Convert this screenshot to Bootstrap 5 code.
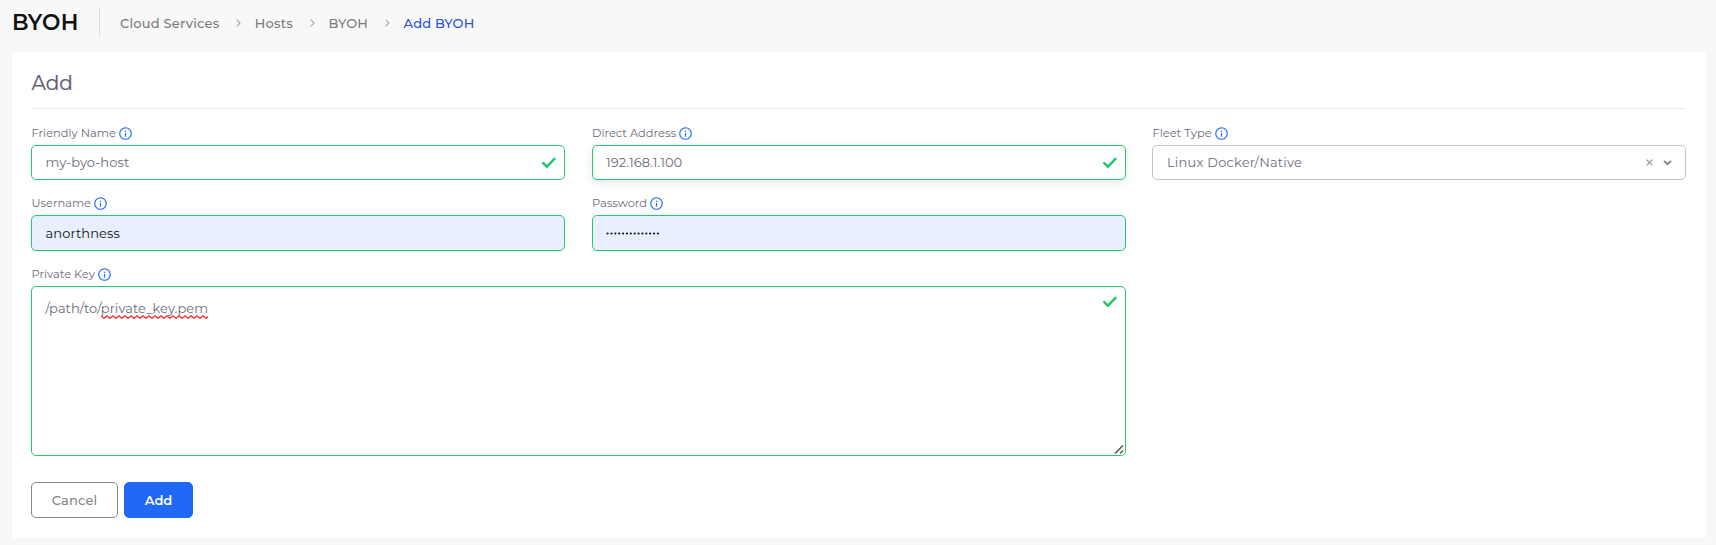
<!DOCTYPE html>
<html lang="en">
<head>
<meta charset="utf-8">
<title>Add BYOH</title>
<link rel="stylesheet" href="https://cdn.jsdelivr.net/npm/bootstrap@5.3.0/dist/css/bootstrap.min.css">
<style>
body{background:#f8f8f8;font-family:Montserrat,Inter,"Liberation Sans",sans-serif;font-size:13px;color:#6e6b7b;overflow:hidden}
.topbar{height:52px;padding:7px 12px 0}
.page-title{font-size:21.8px;letter-spacing:.4px;font-weight:600;color:#111;line-height:29px;width:88px;height:28px;border-right:1px solid #d6dce1;margin:1px 20px 0 0}
.crumbs{font-weight:500;font-size:13px;letter-spacing:.2px;color:#7b7b7b;line-height:32px;height:32px}
.crumbs a{color:inherit;text-decoration:none}
.crumbs .active{color:#2a50e0}
.crumbs svg{width:5px;height:8px;flex:none}
.panel{margin:0 10px 0 12px;height:486px;padding:0 20px 0 19px;border:0;border-radius:0}
.panel h4{font-size:20px;font-weight:400;color:#5e5873;-webkit-text-stroke:.2px #5e5873;line-height:24px;margin:0;padding:19px 0 13px .5px;height:57px;border-bottom:1px solid #ebe9f1}
.fields{display:grid;grid-template-columns:repeat(3,534px);column-gap:26.5px}
.wide{grid-column:span 2}
.fld label{display:flex;align-items:center;gap:3px;font-size:11.43px;line-height:16px;height:16px;margin:0 0 4px;padding-left:.5px;white-space:nowrap}
.fld label svg{width:13px;height:13px}
.form-control{font-size:13px;letter-spacing:.1px;line-height:19px;color:#6e6b7b;border-radius:5px;border-color:#28c76f;padding:7px 13px 7px 13.5px;height:35px;background:#fff}
.form-control.filled{background:#e8f0fe;color:#111;height:36px;padding-top:8px}
.form-control.raised{box-shadow:0 3px 10px rgba(34,41,47,.1)}
.form-control.area{height:170px;padding:12px 8px 1px 13.5px;position:relative}
.form-control.picker{border-color:#c6c6c6;padding-left:14px}
.check{width:14px;height:12px;flex:none}
.grip{position:absolute;right:1px;bottom:1px;width:10px;height:9px}
.misspelt{text-decoration:none;position:relative}
.misspelt svg{position:absolute;left:0;top:15px;width:107px;height:4px}
.act{font-size:13px;font-weight:500;letter-spacing:.15px;height:36px;border-radius:5px;padding:0;line-height:34px}
.act-cancel{width:87px;border:1px solid #82868b;color:#82868b}
.act-add{width:69px;background:#2068f8;color:#fff;border:1px solid #2068f8;font-weight:600;letter-spacing:0}
</style>
</head>
<body>
<svg class="d-none">
<symbol id="info" viewBox="0 0 13 13"><circle cx="6.5" cy="6.5" r="5.75" fill="none" stroke="#2068f8" stroke-width="1.15"/><path d="M6.5 5.9v3.5M6.5 3.7v1.2" stroke="#2068f8" stroke-width="1.2"/></symbol>
<symbol id="tick" viewBox="0 0 14 12"><path d="M1.3 6.1 5 9.7 12.4 1.9" fill="none" stroke="#28c76f" stroke-width="2.6" stroke-linejoin="round" stroke-linecap="round"/></symbol>
<symbol id="next" viewBox="0 0 5 8"><path d="M.7.7 4 4 .7 7.3" fill="none" stroke="#a9a9b0" stroke-width="1.1"/></symbol>
</svg>
<header class="topbar d-flex">
<div class="page-title">BYOH</div>
<nav class="crumbs d-flex align-items-center" aria-label="breadcrumb">
<a href="#">Cloud Services</a><svg style="margin:0 14px 0 16.5px"><use href="#next"/></svg>
<a href="#">Hosts</a><svg style="margin:0 14px 0 16.5px"><use href="#next"/></svg>
<a href="#">BYOH</a><svg style="margin:0 14px 0 16.5px"><use href="#next"/></svg>
<span class="active">Add BYOH</span>
</nav>
</header>
<main class="panel card">
<h4>Add</h4>
<div class="fields" style="padding-top:16px">
<div class="fld"><label>Friendly Name<svg><use href="#info"/></svg></label>
<div class="form-control d-flex align-items-center"><span class="me-auto">my-byo-host</span><svg class="check" style="margin-right:-5px"><use href="#tick"/></svg></div></div>
<div class="fld"><label>Direct Address<svg><use href="#info"/></svg></label>
<div class="form-control raised d-flex align-items-center"><span class="me-auto" style="letter-spacing:.05px">192.168.1.100</span><svg class="check" style="margin-right:-5px"><use href="#tick"/></svg></div></div>
<div class="fld"><label>Fleet Type<svg><use href="#info"/></svg></label>
<div class="form-control picker d-flex align-items-center"><span class="me-auto" style="letter-spacing:.2px">Linux Docker/Native</span>
<svg width="7" height="7" viewBox="0 0 7 7" style="margin-right:10px"><path d="m.7.7 5.6 5.6M6.3.7.7 6.3" stroke="#8c8c8c" stroke-width="1.1"/></svg>
<svg width="9" height="6" viewBox="0 0 9 6"><path d="m1 1 3.5 3.2L8 1" fill="none" stroke="#858585" stroke-width="1.9"/></svg></div></div>
</div>
<div class="fields" style="padding-top:15px">
<div class="fld"><label>Username<svg><use href="#info"/></svg></label>
<div class="form-control filled">anorthness</div></div>
<div class="fld"><label>Password<svg><use href="#info"/></svg></label>
<div class="form-control filled"><svg class="d-block" width="54" height="19" viewBox="0 0 54 19"><path d="M1.6 9.5H54" stroke="#111" stroke-width="2.2" stroke-linecap="round" stroke-dasharray="0 3.87"/></svg></div></div>
</div>
<div class="fields" style="padding-top:15px">
<div class="fld wide"><label>Private Key<svg><use href="#info"/></svg></label>
<div class="form-control area d-flex align-items-start"><span class="me-auto" style="letter-spacing:.07px">/path/to/<span class="misspelt">private_key.pem<svg viewBox="0 0 107 4"><defs><pattern id="wave" width="6" height="4" patternUnits="userSpaceOnUse"><path d="M-1.5 .3 0 .8 3 3.3 6 .8 9 3.3" fill="none" stroke="#f33" stroke-width="1.3"/></pattern></defs><rect width="107" height="4" fill="url(#wave)"/></svg></span></span>
<svg class="check" style="margin-top:-3px"><use href="#tick"/></svg>
<svg class="grip" viewBox="0 0 10 9"><path d="M1 8.5 9 .5M6 8.5 9 5.5" stroke="#555" stroke-width="1.5"/></svg></div></div>
</div>
<div class="d-flex" style="padding-top:26px;gap:6px"><button class="btn act act-cancel">Cancel</button><button class="btn act act-add">Add</button></div>
</main>
<script src="https://cdn.jsdelivr.net/npm/bootstrap@5.3.0/dist/js/bootstrap.bundle.min.js"></script>
</body>
</html>
